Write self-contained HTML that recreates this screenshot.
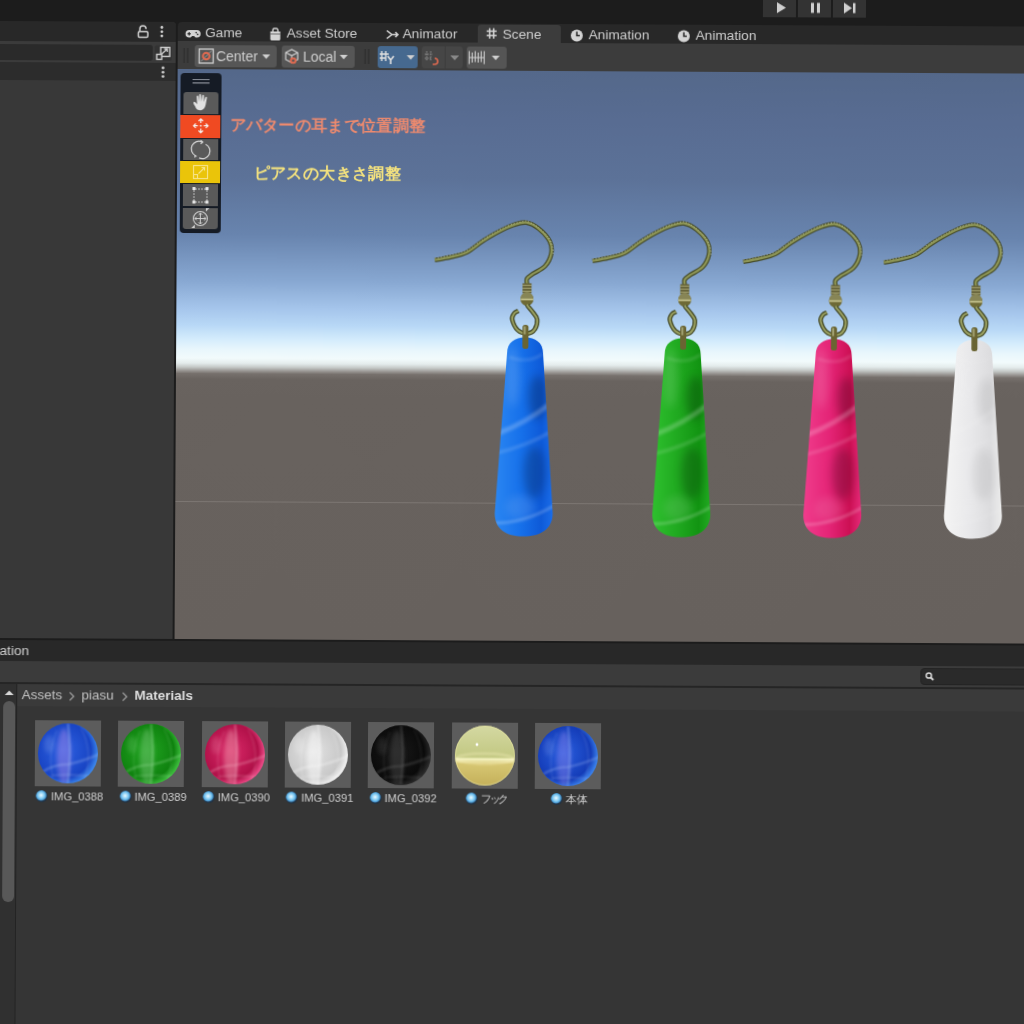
<!DOCTYPE html>
<html><head><meta charset="utf-8">
<style>
*{margin:0;padding:0;box-sizing:border-box}
html,body{width:1024px;height:1024px;overflow:hidden;background:#1c1c1c;font-family:"Liberation Sans",sans-serif;color:#d2d2d2}
#root{position:absolute;left:-20px;top:-20px;width:1080px;height:1080px;transform-origin:20px 20px;transform:rotate(0.31deg);background:#1c1c1c;filter:blur(0.4px)}
#c{position:absolute;left:20px;top:20px;width:1060px;height:1060px}
.a{position:absolute}
.tab{position:absolute;top:0;height:20px;font-size:13.7px;line-height:21px;color:#cfcfcf;white-space:nowrap}
.btn{position:absolute;top:4px;height:22px;background:#565656;border-radius:3px;font-size:14px;line-height:22px;color:#cfcfcf;white-space:nowrap}
.tile{position:absolute;top:80px;width:66px;height:66px;background:#5c5c5c}
.lbl{position:absolute;top:149px;font-size:11.2px;line-height:14px;color:#cfcfcf;white-space:nowrap}
.dot{position:absolute;top:0;width:12px;height:12px;border-radius:50%;background:radial-gradient(circle 8px at 45% 42%,#eefaff 0,#b8e4fa 1.5px,#78c4ee 3.5px,#4a98d0 4.8px,#243a50 5.8px,#1a2430 8px)}
</style></head><body>
<div id="root"><div id="c">

<!-- top bar play buttons -->
<div class="a" style="left:763px;top:-6px;width:33px;height:19px;background:#333"></div>
<div class="a" style="left:798px;top:-6px;width:33px;height:19px;background:#333"></div>
<div class="a" style="left:833px;top:-6px;width:33px;height:19px;background:#333"></div>
<svg class="a" style="left:760px;top:-6px" width="110" height="20">
 <path d="M17,4 L26,9.5 L17,15 Z" fill="#cfcfcf"/>
 <rect x="51" y="4.5" width="3" height="10" fill="#cfcfcf"/><rect x="57" y="4.5" width="3" height="10" fill="#cfcfcf"/>
 <path d="M84,4 L92,9.5 L84,15 Z" fill="#cfcfcf"/><rect x="93" y="4.5" width="2.5" height="10" fill="#cfcfcf"/>
</svg>

<!-- left panel -->
<div class="a" style="left:0;top:20.5px;width:176.3px;height:617.2px;background:#383838;border-top-right-radius:4px;overflow:hidden">
  <div class="a" style="left:0;top:0;width:177px;height:20px;background:#282828"></div>
  <div class="a" style="left:0;top:20px;width:177px;height:21px;background:#3b3b3b">
    <div class="a" style="left:0;top:3px;width:153px;height:16px;background:#2a2a2a;border-radius:0 3px 3px 0"></div>
  </div>
  <div class="a" style="left:0;top:41px;width:177px;height:18px;background:#2c2c2c"></div>
  <svg class="a" style="left:0;top:0" width="177" height="60">
    <path d="M140,9.5 V7.2 A3.1,3.1 0 0 1 146.2,7.2" fill="none" stroke="#d0d0d0" stroke-width="1.5"/>
    <rect x="138.5" y="9.8" width="9.5" height="5.6" rx="1.2" fill="none" stroke="#d0d0d0" stroke-width="1.5"/>
    <circle cx="162" cy="5.5" r="1.4" fill="#d0d0d0"/><circle cx="162" cy="9.8" r="1.4" fill="#d0d0d0"/><circle cx="162" cy="14.1" r="1.4" fill="#d0d0d0"/>
    <rect x="155" y="23.5" width="17" height="15.5" rx="2" fill="#333"/>
    <rect x="161" y="25.5" width="9" height="9" fill="none" stroke="#d0d0d0" stroke-width="1.4"/>
    <rect x="157" y="32.5" width="5" height="5" fill="#333" stroke="#d0d0d0" stroke-width="1.4"/>
    <path d="M162,32 L167.5,27 M164.5,27 L167.5,27 L167.5,30" fill="none" stroke="#d0d0d0" stroke-width="1.3"/>
    <circle cx="163.4" cy="46" r="1.4" fill="#d0d0d0"/><circle cx="163.4" cy="50.3" r="1.4" fill="#d0d0d0"/><circle cx="163.4" cy="54.6" r="1.4" fill="#d0d0d0"/>
  </svg>
</div>

<!-- right: tabs -->
<div class="a" style="left:178.2px;top:20.5px;width:900px;height:19.5px;background:#282828;border-top-left-radius:4px">
  <div class="a" style="left:300px;top:1px;width:83px;height:19px;background:#3c3c3c;border-radius:3px 3px 0 0"></div>
  <div class="tab" style="left:27px">Game</div>
  <div class="tab" style="left:108.5px">Asset Store</div>
  <div class="tab" style="left:224.5px">Animator</div>
  <div class="tab" style="left:324.5px">Scene</div>
  <div class="tab" style="left:410.5px">Animation</div>
  <div class="tab" style="left:517.5px">Animation</div>
  <svg class="a" style="left:0;top:0" width="600" height="20">
    <path d="M11.5,8 h7.5 a3.8,3.8 0 0 1 0,7.6 h-1.2 l-1.6,-1.6 h-1.9 l-1.6,1.6 h-1.2 a3.8,3.8 0 0 1 0,-7.6 z" fill="#d4d4d4"/>
    <g fill="#282828"><rect x="9.6" y="11.2" width="3.4" height="1.2"/><rect x="10.7" y="10.1" width="1.2" height="3.4"/><circle cx="18.3" cy="10.6" r="0.8"/><circle cx="19.8" cy="12.4" r="0.8"/></g>
    <path d="M92.5,9 h10 v7.5 a1.5,1.5 0 0 1 -1.5,1.5 h-7 a1.5,1.5 0 0 1 -1.5,-1.5 z" fill="#d4d4d4"/>
    <path d="M95,9 v-1.5 a1.5,1.5 0 0 1 1.5,-1.5 h2 a1.5,1.5 0 0 1 1.5,1.5 v1.5" fill="none" stroke="#d4d4d4" stroke-width="1.4"/>
    <path d="M92.5,11.5 h10" stroke="#282828" stroke-width="0.6"/>
    <path d="M209,7.5 L214,11.5 L209,15.5 M214,11.5 L220,11.5 M217.5,9 L220,11.5 L217.5,14" fill="none" stroke="#d4d4d4" stroke-width="1.6"/>
    <path d="M311.8,4.5 v10.5 M315.8,4.5 v10.5 M308.8,7.5 h10 M308.8,11.8 h10" fill="none" stroke="#d4d4d4" stroke-width="1.5"/>
    <circle cx="399" cy="11.5" r="6" fill="#d4d4d4"/><path d="M399,7.5 v4 h3" fill="none" stroke="#282828" stroke-width="1.5"/>
    <circle cx="506" cy="11.5" r="6" fill="#d4d4d4"/><path d="M506,7.5 v4 h3" fill="none" stroke="#282828" stroke-width="1.5"/>
  </svg>
</div>

<!-- right: toolbar -->
<div class="a" style="left:178.2px;top:40px;width:900px;height:28px;background:#3c3c3c">
  <div class="btn" style="left:17px;width:82px;padding-left:21px">Center</div>
  <div class="btn" style="left:104px;width:73px;padding-left:21px">Local</div>
  <div class="btn" style="left:199.5px;width:24px;background:#46698f;border-radius:3px 0 0 3px"></div>
  <div class="btn" style="left:224px;width:16px;background:#46698f;border-radius:0 3px 3px 0"></div>
  <div class="btn" style="left:244px;width:23px;background:#464646;border-radius:3px 0 0 3px"></div>
  <div class="btn" style="left:268px;width:17px;background:#464646;border-radius:0 3px 3px 0"></div>
  <div class="btn" style="left:289px;width:40px;background:#555"></div>
  <svg class="a" style="left:0;top:0" width="400" height="28">
    <path d="M6.5,7 v15 M10,7 v15 M187.5,7 v15 M191,7 v15" stroke="#2e2e2e" stroke-width="1.2"/>
    <rect x="21.5" y="8" width="14" height="14" fill="none" stroke="#d0d0d0" stroke-width="1.3"/>
    <path d="M23,20.5 L34,9.5" stroke="#9a9a9a" stroke-width="1"/>
    <circle cx="28.5" cy="15" r="3.3" fill="none" stroke="#e06a50" stroke-width="2"/>
    <path d="M108,11 L114,8 L120,11 L120,18 L114,21 L108,18 Z M108,11 L114,14 L120,11 M114,14 V21" fill="none" stroke="#d0d0d0" stroke-width="1.2"/>
    <circle cx="115.5" cy="19" r="3.3" fill="#e06a50"/><circle cx="115.5" cy="19" r="1.3" fill="#555"/>
    <path d="M84.5,13 h8 l-4,4.5 z M162,13 h8 l-4,4.5 z M229,13 h8 l-4,4.5 z M273,13 h8 l-4,4.5 z M314,13 h8 l-4,4.5 z" fill="#d0d0d0"/>
    <path d="M273,13 h8 l-4,4.5 z" fill="#888"/>
    <path d="M204,9 v10 M208,9 v10 M202,12 h9 M202,16 h6" stroke="#e0e0e0" stroke-width="1.4" fill="none"/>
    <path d="M210,14 l3,4 l3,-4 M213,18 v4" stroke="#e0e0e0" stroke-width="1.6" fill="none"/>
    <path d="M249,9 v10 M253,9 v10 M247,12 h8 M247,16 h6" stroke="#8a8a8a" stroke-width="1.2" fill="none" stroke-dasharray="1.5 1"/>
    <path d="M257,16 a3,3 0 0 1 0,6 h-2" stroke="#e06a50" stroke-width="1.6" fill="none"/>
    <path d="M291.5,8.5 v13 M306.5,8.5 v13 M294.5,10 v10 M297.5,8.5 v11 M300.5,10 v10 M303.5,8.5 v11 M291.5,15 h15" stroke="#d0d0d0" stroke-width="1.1" fill="none"/>
  </svg>
</div>

<!-- scene view -->
<div class="a" id="scene" style="left:178.2px;top:68px;width:900px;height:569.7px;overflow:hidden;
 background:linear-gradient(to bottom,#54688a 0px,#586c92 50px,#5c7298 108px,#6884ae 165px,#88a8d2 212px,#a6c6ec 240px,#b8d8f6 256px,#d4ecfc 270px,#e8f6fc 280px,#f2fbfc 289px,#e4ecec 294px,#c4c8c6 298px,#9a9794 301.5px,#76706c 304.5px,#69635f 310px,#68625e 330px,#67615d 569px)">
  <div class="a" style="left:0;top:432.3px;width:900px;height:1px;background:#7c7672"></div>
</div>

<!-- tool palette -->
<div class="a" style="left:180.8px;top:72.4px;width:41px;height:159.6px;background:#151b25;border-radius:4px"></div>
<div class="a" style="left:183.8px;top:91.3px;width:35px;height:21.4px;background:#5a5a5a;border-radius:3px 3px 0 0"></div>
<div class="a" style="left:181.3px;top:114px;width:40px;height:22.5px;background:#f04a22"></div>
<div class="a" style="left:183.8px;top:137.6px;width:35px;height:21.4px;background:#5a5a5a"></div>
<div class="a" style="left:181.3px;top:160px;width:40px;height:22.3px;background:#eac40a"></div>
<div class="a" style="left:183.8px;top:183px;width:35px;height:22px;background:#5a5a5a"></div>
<div class="a" style="left:183.8px;top:206.5px;width:35px;height:21.5px;background:#5a5a5a;border-radius:0 0 3px 3px"></div>
<svg class="a" style="left:180.8px;top:72.4px" width="41" height="160">
  <path d="M12,6.5 h17 M12,9.8 h17" stroke="#8a8f98" stroke-width="1.2"/>
  <g transform="translate(20.5,29.5) scale(0.85) translate(-20.5,-28)">
  <path d="M15,35 C13,31 11,29 12,27.5 C13,26.5 14.5,28 16,30 L15.5,21 C15.5,19.5 17.5,19.5 17.5,21 L18,27 L18.5,19 C18.5,17.5 20.5,17.5 20.5,19 L21,27 L22,20 C22,18.5 24,18.5 24,20 L24,27.5 L25.5,22 C26,20.5 27.8,21 27.5,22.5 L26,31 C25,35 23,37 20,37 C17.5,37 16,36.5 15,35 Z" fill="#e2e2e2"/>
  </g>
  <g transform="translate(0,1.5)"><g stroke="#f4f4f4" stroke-width="1.2" fill="none">
  <path d="M20.5,44.5 v4 M20.5,54 v4 M13.5,51.2 h4 M23.5,51.2 h4"/>
  <path d="M18.3,46.5 l2.2,-2.2 l2.2,2.2 M18.3,56 l2.2,2.2 l2.2,-2.2 M15.5,49 l-2.2,2.2 l2.2,2.2 M25.5,49 l2.2,2.2 l-2.2,2.2"/>
  </g>
  <circle cx="20.5" cy="51.2" r="0.9" fill="#f4f4f4"/></g>
  <g stroke="#d8d8d8" stroke-width="1.2" fill="none" transform="translate(0,2.7)">
  <path d="M15.5,80 A7,7 0 0 1 22,66.2"/>
  <path d="M25.5,68.5 A7,7 0 0 1 19,82.2"/>
  <path d="M20.5,64.5 l2,1.7 l-2,1.8 M16.5,80.5 l-1.5,-0.5 l-0.3,1.8"/>
  </g>
  <g stroke="#f7e48a" stroke-width="1.1" fill="none" transform="translate(0,-3)">
  <rect x="13.5" y="95.5" width="14" height="13"/>
  <rect x="13.5" y="104.5" width="4" height="4"/>
  <path d="M18.5,103.5 L24.5,97.5 M21.5,97.5 h3 v3"/>
  </g>
  <g transform="translate(0,-1)"><path d="M15,117 h11 M15,130 h11 M14,118 v11 M27,118 v11" stroke="#c8c8c8" stroke-width="0.9" fill="none" stroke-dasharray="2 1"/>
  <g fill="#e6e6e6"><rect x="12.5" y="115" width="3" height="3"/><rect x="25.5" y="115" width="3" height="3"/><rect x="12.5" y="128.5" width="3" height="3"/><rect x="25.5" y="128.5" width="3" height="3"/></g></g>
  <circle cx="20.5" cy="145.5" r="7" stroke="#d0d0d0" stroke-width="1.1" fill="none"/>
  <path d="M20.5,140 v11 M15,145.5 h11 M18.7,141.8 l1.8,-1.8 l1.8,1.8 M18.7,149.2 l1.8,1.8 l1.8,-1.8 M16.8,143.7 l-1.8,1.8 l1.8,1.8 M24.2,143.7 l1.8,1.8 l-1.8,1.8" stroke="#d0d0d0" stroke-width="1" fill="none"/>
  <path d="M11.5,155 l3.5,-3.5 v3.5 z M29.5,135 l-3.5,3.5 v-3.5 z" fill="#d0d0d0"/>
</svg>

<!-- annotations -->
<div class="a" style="left:230.6px;top:114px;font-size:16px;line-height:20px;font-weight:bold;letter-spacing:0.3px;color:#ee8a6e;white-space:nowrap">アバターの耳まで位置調整</div>
<div class="a" style="left:254.6px;top:162px;font-size:16px;line-height:20px;font-weight:bold;letter-spacing:0.4px;color:#f4e27e;white-space:nowrap">ピアスの大きさ調整</div>

<!-- earrings -->
<svg class="a" style="left:0;top:0" width="1060" height="640">
 <defs>
  <path id="hw" fill="none" d="M-92.4,-38.7 C-89.7,-39.2 -81.3,-40.7 -76.0,-42.0 C-70.7,-43.3 -65.6,-44.1 -60.4,-46.7 C-55.2,-49.3 -50.0,-54.4 -44.8,-57.8 C-39.6,-61.2 -34.4,-64.5 -29.2,-67.2 C-24.0,-70.0 -18.3,-72.7 -13.6,-74.3 C-8.9,-75.9 -5.3,-77.3 -1.1,-76.7 C3.1,-76.1 7.5,-73.7 11.4,-70.6 C15.3,-67.5 20.3,-62.3 22.4,-58.1 C24.5,-53.9 24.8,-49.8 24.0,-45.6 C23.2,-41.4 20.9,-36.5 17.8,-33.1 C14.7,-29.7 8.4,-27.3 5.4,-25.2 C2.4,-23.1 0.8,-22.2 -0.1,-20.5 C-1.0,-18.8 -0.0,-15.9 0.0,-15.0"/>
  <path id="lw" fill="none" d="M0.5,5.0 C0.6,5.3 -0.0,5.5 0.9,6.8 C1.8,8.1 4.4,10.8 6.0,13.0 C7.6,15.2 10.0,17.3 10.3,20.1 C10.6,22.9 9.6,27.6 8.0,30.0 C6.5,32.4 3.8,34.0 1.0,34.2 C-1.8,34.4 -6.4,33.3 -9.0,31.0 C-11.6,28.7 -14.1,23.0 -14.7,20.2 C-15.3,17.4 -13.5,15.4 -12.5,14.0 C-11.5,12.6 -9.2,12.0 -8.5,11.6"/>
  <g id="hook">
   <use href="#hw" stroke="#464c2a" stroke-width="4.6"/>
   <use href="#hw" stroke="#8e9656" stroke-width="2.2"/>
   <path d="M-92.4,-40.5 C-81.3,-42.5 -70.7,-45 -60.4,-48.5 C-50,-56.2 -39.6,-63 -29.2,-69 C-18.3,-74.5 -8.9,-77.7 -1.1,-78.5 C7.5,-75.5 15.3,-69.3 22.4,-60 C25.5,-53 26.3,-48 25.8,-44.5" fill="none" stroke="#e0e4d8" stroke-width="0.9" stroke-dasharray="1 2" opacity="0.7"/>
   <rect x="-4.5" y="-16" width="9" height="10" fill="#66633a"/>
   <path d="M-4.5,-14 h9 M-4.5,-11 h9 M-4.5,-8 h9" stroke="#a8a676" stroke-width="0.9"/>
   <circle cx="0" cy="0" r="6.5" fill="#6e6a36"/>
   <path d="M-6.3,-1 A6.3,6.3 0 0 1 6.3,-1 Z" fill="#878556"/>
   <rect x="-6.3" y="-0.8" width="12.6" height="1.8" fill="#c6c490"/>
   <use href="#lw" stroke="#464c2a" stroke-width="4.6"/>
   <use href="#lw" stroke="#9aa060" stroke-width="2"/>
  </g>
  <linearGradient id="gb" x1="0" x2="1" y1="0" y2="0"><stop offset="0" stop-color="#2a86f2"/><stop offset="0.45" stop-color="#1670ea"/><stop offset="0.8" stop-color="#0e5ad8"/><stop offset="1" stop-color="#1a6ce8"/></linearGradient>
  <linearGradient id="gg" x1="0" x2="1" y1="0" y2="0"><stop offset="0" stop-color="#2ec02e"/><stop offset="0.45" stop-color="#1fa81f"/><stop offset="0.8" stop-color="#129412"/><stop offset="1" stop-color="#22aa22"/></linearGradient>
  <linearGradient id="gp" x1="0" x2="1" y1="0" y2="0"><stop offset="0" stop-color="#f03c8c"/><stop offset="0.45" stop-color="#e42476"/><stop offset="0.8" stop-color="#cc1054"/><stop offset="1" stop-color="#e42a78"/></linearGradient>
  <linearGradient id="gw" x1="0" x2="1" y1="0" y2="0"><stop offset="0" stop-color="#f4f4f4"/><stop offset="0.45" stop-color="#e8e8ea"/><stop offset="0.8" stop-color="#dcdcde"/><stop offset="1" stop-color="#ececec"/></linearGradient>
  <path id="pend" d="M-18,16 C-18,5 -10,0 0,0 C10,0 18,5 18,16 L28.5,176 C28.5,192 16,199 -1,199 C-18,199 -29.5,192 -29.5,176 Z"/>
  <clipPath id="pc"><use href="#pend"/></clipPath>
  <filter id="bl4" x="-50%" y="-50%" width="200%" height="200%"><feGaussianBlur stdDeviation="4"/></filter>
  <filter id="bl2" x="-50%" y="-50%" width="200%" height="200%"><feGaussianBlur stdDeviation="1.6"/></filter>
  <g id="tex" clip-path="url(#pc)">
   <ellipse cx="13" cy="60" rx="9" ry="22" fill="#000" opacity="0.22" filter="url(#bl4)"/>
   <ellipse cx="10" cy="135" rx="11" ry="26" fill="#000" opacity="0.2" filter="url(#bl4)"/>
   <ellipse cx="-12" cy="40" rx="7" ry="30" fill="#fff" opacity="0.12" filter="url(#bl4)"/>
   <ellipse cx="-4" cy="170" rx="14" ry="12" fill="#fff" opacity="0.1" filter="url(#bl4)"/>
   <path d="M-26,96 C-10,90 8,80 26,66" stroke="#fff" stroke-width="5" fill="none" opacity="0.22" filter="url(#bl2)"/>
   <path d="M-28,116 C-12,112 10,104 27,94" stroke="#fff" stroke-width="3" fill="none" opacity="0.16" filter="url(#bl2)"/>
   <path d="M-30,186 C-10,186 10,180 30,168" stroke="#fff" stroke-width="1.8" fill="none" opacity="0.35" filter="url(#bl2)"/>
   <path d="M-16,20 C-4,24 8,24 18,16" stroke="#fff" stroke-width="2.5" fill="none" opacity="0.15" filter="url(#bl2)"/>
  </g>
 </defs>
 <g transform="translate(528.6,296.4)"><use href="#hook"/></g>
 <g transform="translate(686.3,296.4)"><use href="#hook"/></g>
 <g transform="translate(837.1,296.4)"><use href="#hook"/></g>
 <g transform="translate(977.6,296.4)"><use href="#hook"/></g>
 <g transform="translate(527,334.4)"><use href="#pend" fill="url(#gb)"/><use href="#tex"/></g>
 <g transform="translate(684.6,334.4)"><use href="#pend" fill="url(#gg)"/><use href="#tex"/></g>
 <g transform="translate(835.6,334.4)"><use href="#pend" fill="url(#gp)"/><use href="#tex"/></g>
 <g transform="translate(976.2,334.4)"><use href="#pend" fill="url(#gw)"/><use href="#tex" opacity="0.3"/></g>
 <g fill="#6a6432">
  <rect x="524.3" y="322" width="6" height="24" rx="2.5"/><rect x="525.5" y="323.5" width="2" height="8" fill="#a0a070"/>
  <rect x="682.0" y="322" width="6" height="24" rx="2.5"/><rect x="683.2" y="323.5" width="2" height="8" fill="#a0a070"/>
  <rect x="832.8" y="322" width="6" height="24" rx="2.5"/><rect x="834.0" y="323.5" width="2" height="8" fill="#a0a070"/>
  <rect x="973.3" y="322" width="6" height="24" rx="2.5"/><rect x="974.5" y="323.5" width="2" height="8" fill="#a0a070"/>
 </g>
</svg>

<!-- bottom panel -->
<div class="a" style="left:0;top:639.5px;width:1060px;height:420px;background:#353535">
  <div class="a" style="left:0;top:0;width:1060px;height:21px;background:#282828"></div>
  <div class="tab" style="left:3px;top:0;line-height:22px">ation</div>
  <div class="a" style="left:0;top:21px;width:1060px;height:21.5px;background:#3b3b3b"></div>
  <div class="a" style="left:0;top:42.5px;width:1060px;height:1.5px;background:#252525"></div>
  <div class="a" style="left:924.4px;top:23.3px;width:140px;height:17px;background:#2a2a2a;border-radius:4px;border:1px solid #232323"></div>
  <svg class="a" style="left:924px;top:23px" width="20" height="18"><circle cx="8.5" cy="7.5" r="2.6" fill="none" stroke="#d8d8d8" stroke-width="1.5"/><path d="M10.5,9.5 L13,12" stroke="#d8d8d8" stroke-width="1.8"/></svg>
  <div class="a" style="left:0;top:44px;width:19.8px;height:400px;background:#303030"></div>
  <div class="a" style="left:19.8px;top:44px;width:1.5px;height:400px;background:#232323"></div>
  <div class="a" style="left:7.1px;top:61.5px;width:11.5px;height:200.5px;background:#585858;border-radius:6px"></div>
  <svg class="a" style="left:7px;top:48px" width="12" height="10"><path d="M1.5,7 L6,2.5 L10.5,7 Z" fill="#d8d8d8"/></svg>
  <div class="a" style="left:21.3px;top:44px;width:1040px;height:22.5px;background:#3a3a3a"></div>
  <div class="a" style="left:25.5px;top:46.5px;font-size:13.5px;line-height:18px;color:#c2c2c2;white-space:nowrap">Assets</div>
  <svg class="a" style="left:70px;top:49px" width="70" height="14"><path d="M3.5,3 L7.5,7 L3.5,11 M56.5,3 L60.5,7 L56.5,11" fill="none" stroke="#9a9a9a" stroke-width="1.3"/></svg>
  <div class="a" style="left:85.3px;top:46.5px;font-size:13.5px;line-height:18px;color:#c2c2c2;white-space:nowrap">piasu</div>
  <div class="a" style="left:138.2px;top:46.5px;font-size:13.5px;line-height:18px;color:#dedede;font-weight:bold;white-space:nowrap">Materials</div>

  <div class="tile" style="left:38.9px"></div>
  <svg class="a" style="left:38.9px;top:80px" width="66" height="66"><defs><filter id="sfb" x="-30%" y="-30%" width="160%" height="160%"><feGaussianBlur stdDeviation="2"/></filter><filter id="sfb1" x="-30%" y="-30%" width="160%" height="160%"><feGaussianBlur stdDeviation="1"/></filter><clipPath id="sc"><circle cx="33" cy="33" r="30"/></clipPath><radialGradient id="sb" cx="0.42" cy="0.45" r="0.58"><stop offset="0" stop-color="#2f62e2"/><stop offset="0.8" stop-color="#1844c4"/><stop offset="1" stop-color="#3c86ea"/></radialGradient><radialGradient id="sg" cx="0.42" cy="0.45" r="0.58"><stop offset="0" stop-color="#22a622"/><stop offset="0.8" stop-color="#0f820f"/><stop offset="1" stop-color="#3cbc3c"/></radialGradient><radialGradient id="sp" cx="0.42" cy="0.45" r="0.58"><stop offset="0" stop-color="#dc2a6a"/><stop offset="0.8" stop-color="#b01048"/><stop offset="1" stop-color="#ea4a86"/></radialGradient><radialGradient id="sw" cx="0.42" cy="0.45" r="0.58"><stop offset="0" stop-color="#e2e2e2"/><stop offset="0.8" stop-color="#c8c8c8"/><stop offset="1" stop-color="#f0f0f0"/></radialGradient><radialGradient id="sk" cx="0.42" cy="0.45" r="0.58"><stop offset="0" stop-color="#1a1a1a"/><stop offset="0.8" stop-color="#0a0a0a"/><stop offset="1" stop-color="#2a2a2a"/></radialGradient><radialGradient id="sb2" cx="0.42" cy="0.45" r="0.58"><stop offset="0" stop-color="#2a60e0"/><stop offset="0.8" stop-color="#143cb8"/><stop offset="1" stop-color="#3a80ea"/></radialGradient><linearGradient id="sy" x1="0" y1="0" x2="0" y2="1"><stop offset="0" stop-color="#d4d8a2"/><stop offset="0.52" stop-color="#c2c882"/><stop offset="0.56" stop-color="#f4f2c0"/><stop offset="0.64" stop-color="#d6c672"/><stop offset="1" stop-color="#c4b05a"/></linearGradient></defs><circle cx="33" cy="33" r="30" fill="url(#sb)"/><g clip-path="url(#sc)"><ellipse cx="29" cy="36" rx="7" ry="28" fill="#9c84e6" opacity="0.5" filter="url(#sfb)"/><ellipse cx="14" cy="24" rx="5" ry="9" fill="#b4c8f4" opacity="0.18" filter="url(#sfb)"/><g fill="none" stroke="#b4c8f4" filter="url(#sfb1)"><path d="M33,3 C35,20 35,45 33,63" stroke-width="1.4" opacity="0.55"/><path d="M7,52 C16,46 26,44 33,44 C44,42 54,38 64,34" stroke-width="1.5" opacity="0.45"/><path d="M16,56 C26,53 40,54 58,56" stroke-width="1.2" opacity="0.35"/><path d="M22,10 C16,24 14,40 18,56" stroke-width="1" opacity="0.25"/><path d="M46,8 C54,22 56,40 50,58" stroke-width="1" opacity="0.25"/></g></g></svg>
  <div class="lbl" style="left:34.9px;width:78px;text-align:center"><span class="dot" style="position:relative;display:inline-block;vertical-align:-2px;margin-right:3px"></span>IMG_0388</div>
  <div class="tile" style="left:122.3px"></div>
  <svg class="a" style="left:122.3px;top:80px" width="66" height="66"><circle cx="33" cy="33" r="30" fill="url(#sg)"/><g clip-path="url(#sc)"><ellipse cx="29" cy="36" rx="7" ry="28" fill="#70c070" opacity="0.5" filter="url(#sfb)"/><ellipse cx="14" cy="24" rx="5" ry="9" fill="#9ee09e" opacity="0.18" filter="url(#sfb)"/><g fill="none" stroke="#9ee09e" filter="url(#sfb1)"><path d="M33,3 C35,20 35,45 33,63" stroke-width="1.4" opacity="0.55"/><path d="M7,52 C16,46 26,44 33,44 C44,42 54,38 64,34" stroke-width="1.5" opacity="0.45"/><path d="M16,56 C26,53 40,54 58,56" stroke-width="1.2" opacity="0.35"/><path d="M22,10 C16,24 14,40 18,56" stroke-width="1" opacity="0.25"/><path d="M46,8 C54,22 56,40 50,58" stroke-width="1" opacity="0.25"/></g></g></svg>
  <div class="lbl" style="left:118.3px;width:78px;text-align:center"><span class="dot" style="position:relative;display:inline-block;vertical-align:-2px;margin-right:3px"></span>IMG_0389</div>
  <div class="tile" style="left:205.6px"></div>
  <svg class="a" style="left:205.6px;top:80px" width="66" height="66"><circle cx="33" cy="33" r="30" fill="url(#sp)"/><g clip-path="url(#sc)"><ellipse cx="29" cy="36" rx="7" ry="28" fill="#e890a4" opacity="0.5" filter="url(#sfb)"/><ellipse cx="14" cy="24" rx="5" ry="9" fill="#f6b8c8" opacity="0.18" filter="url(#sfb)"/><g fill="none" stroke="#f6b8c8" filter="url(#sfb1)"><path d="M33,3 C35,20 35,45 33,63" stroke-width="1.4" opacity="0.55"/><path d="M7,52 C16,46 26,44 33,44 C44,42 54,38 64,34" stroke-width="1.5" opacity="0.45"/><path d="M16,56 C26,53 40,54 58,56" stroke-width="1.2" opacity="0.35"/><path d="M22,10 C16,24 14,40 18,56" stroke-width="1" opacity="0.25"/><path d="M46,8 C54,22 56,40 50,58" stroke-width="1" opacity="0.25"/></g></g></svg>
  <div class="lbl" style="left:201.6px;width:78px;text-align:center"><span class="dot" style="position:relative;display:inline-block;vertical-align:-2px;margin-right:3px"></span>IMG_0390</div>
  <div class="tile" style="left:289px"></div>
  <svg class="a" style="left:289px;top:80px" width="66" height="66"><circle cx="33" cy="33" r="30" fill="url(#sw)"/><g clip-path="url(#sc)"><ellipse cx="29" cy="36" rx="7" ry="28" fill="#fafafa" opacity="0.5" filter="url(#sfb)"/><ellipse cx="14" cy="24" rx="5" ry="9" fill="#ffffff" opacity="0.18" filter="url(#sfb)"/><g fill="none" stroke="#ffffff" filter="url(#sfb1)"><path d="M33,3 C35,20 35,45 33,63" stroke-width="1.4" opacity="0.55"/><path d="M7,52 C16,46 26,44 33,44 C44,42 54,38 64,34" stroke-width="1.5" opacity="0.45"/><path d="M16,56 C26,53 40,54 58,56" stroke-width="1.2" opacity="0.35"/><path d="M22,10 C16,24 14,40 18,56" stroke-width="1" opacity="0.25"/><path d="M46,8 C54,22 56,40 50,58" stroke-width="1" opacity="0.25"/></g></g></svg>
  <div class="lbl" style="left:285.0px;width:78px;text-align:center"><span class="dot" style="position:relative;display:inline-block;vertical-align:-2px;margin-right:3px"></span>IMG_0391</div>
  <div class="tile" style="left:372.4px"></div>
  <svg class="a" style="left:372.4px;top:80px" width="66" height="66"><circle cx="33" cy="33" r="30" fill="url(#sk)"/><g clip-path="url(#sc)"><ellipse cx="29" cy="36" rx="7" ry="28" fill="#454545" opacity="0.5" filter="url(#sfb)"/><ellipse cx="14" cy="24" rx="5" ry="9" fill="#707070" opacity="0.18" filter="url(#sfb)"/><g fill="none" stroke="#707070" filter="url(#sfb1)"><path d="M33,3 C35,20 35,45 33,63" stroke-width="1.4" opacity="0.55"/><path d="M7,52 C16,46 26,44 33,44 C44,42 54,38 64,34" stroke-width="1.5" opacity="0.45"/><path d="M16,56 C26,53 40,54 58,56" stroke-width="1.2" opacity="0.35"/><path d="M22,10 C16,24 14,40 18,56" stroke-width="1" opacity="0.25"/><path d="M46,8 C54,22 56,40 50,58" stroke-width="1" opacity="0.25"/></g></g></svg>
  <div class="lbl" style="left:368.4px;width:78px;text-align:center"><span class="dot" style="position:relative;display:inline-block;vertical-align:-2px;margin-right:3px"></span>IMG_0392</div>
  <div class="tile" style="left:455.6px"></div>
  <svg class="a" style="left:455.6px;top:80px" width="66" height="66"><circle cx="33" cy="33" r="30" fill="url(#sy)"/><ellipse cx="33" cy="36" rx="28.5" ry="5" fill="none" stroke="#fff8c8" stroke-width="1.6" opacity="0.55" filter="url(#sfb1)"/><circle cx="33" cy="33" r="29.5" fill="none" stroke="#e8e4a0" stroke-width="1" opacity="0.6"/><circle cx="25" cy="22" r="1.4" fill="#fff"/></svg>
  <div class="lbl" style="left:451.6px;width:78px;text-align:center"><span class="dot" style="position:relative;display:inline-block;vertical-align:-2px;margin-right:3px"></span><span style="letter-spacing:-2.5px">フック</span></div>
  <div class="tile" style="left:538.8px"></div>
  <svg class="a" style="left:538.8px;top:80px" width="66" height="66"><circle cx="33" cy="33" r="30" fill="url(#sb2)"/><g clip-path="url(#sc)"><ellipse cx="29" cy="36" rx="7" ry="28" fill="#7c7ce6" opacity="0.5" filter="url(#sfb)"/><ellipse cx="14" cy="24" rx="5" ry="9" fill="#a0b8f4" opacity="0.18" filter="url(#sfb)"/><g fill="none" stroke="#a0b8f4" filter="url(#sfb1)"><path d="M33,3 C35,20 35,45 33,63" stroke-width="1.4" opacity="0.55"/><path d="M7,52 C16,46 26,44 33,44 C44,42 54,38 64,34" stroke-width="1.5" opacity="0.45"/><path d="M16,56 C26,53 40,54 58,56" stroke-width="1.2" opacity="0.35"/><path d="M22,10 C16,24 14,40 18,56" stroke-width="1" opacity="0.25"/><path d="M46,8 C54,22 56,40 50,58" stroke-width="1" opacity="0.25"/></g></g></svg>
  <div class="lbl" style="left:534.8px;width:78px;text-align:center"><span class="dot" style="position:relative;display:inline-block;vertical-align:-2px;margin-right:3px"></span>本体</div>
</div>

</div></div>
</body></html>
